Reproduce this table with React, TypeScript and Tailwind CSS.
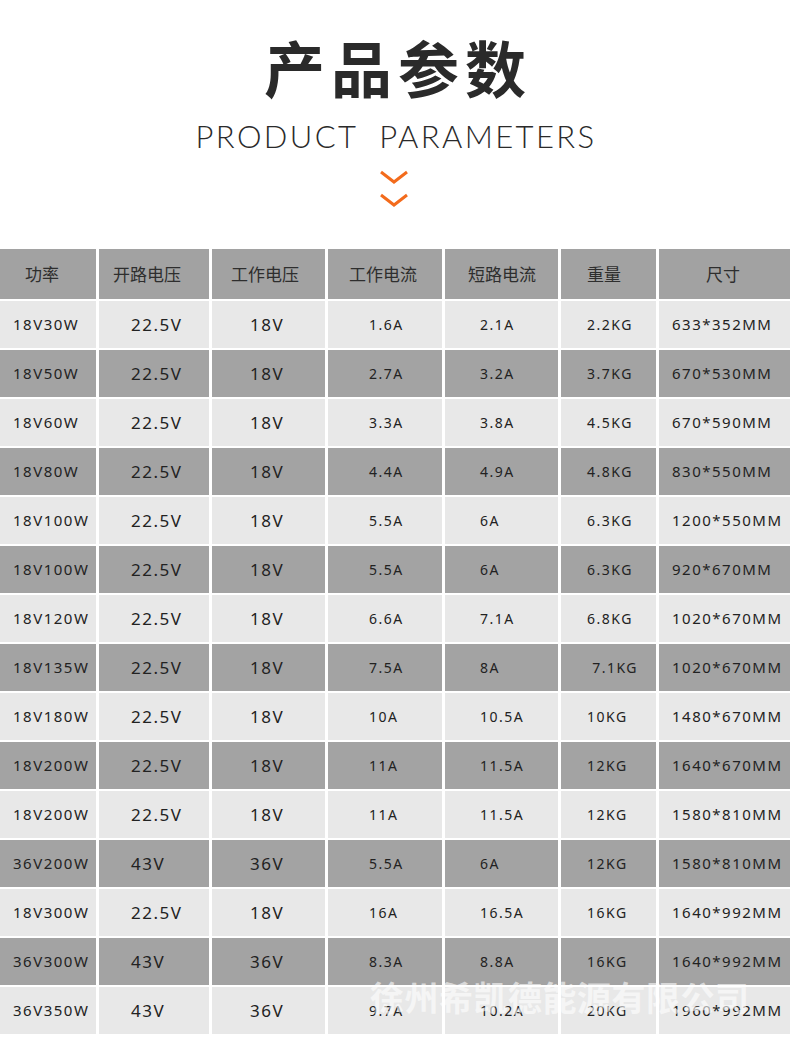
import React from 'react';

const cols = [
  { head: '功率', hp: 'pl-[25px]', bp: 'pl-[13px]', size: 'text-[15px]' },
  { head: '开路电压', hp: 'pl-[14px]', bp: 'pl-[32px]', size: 'text-[17px]' },
  { head: '工作电压', hp: 'pl-[19px]', bp: 'pl-[38px]', size: 'text-[17px]' },
  { head: '工作电流', hp: 'pl-[21px]', bp: 'pl-[41px]', size: 'text-[14px]' },
  { head: '短路电流', hp: 'pl-[23px]', bp: 'pl-[35px]', size: 'text-[14px]' },
  { head: '重量', hp: 'pl-[26px]', bp: 'pl-[26px]', size: 'text-[14px]' },
  { head: '尺寸', hp: 'pl-[47px]', bp: 'pl-[13px]', size: 'text-[15px]' },
];

const rows = [
  ['18V30W', '22.5V', '18V', '1.6A', '2.1A', '2.2KG', '633*352MM'],
  ['18V50W', '22.5V', '18V', '2.7A', '3.2A', '3.7KG', '670*530MM'],
  ['18V60W', '22.5V', '18V', '3.3A', '3.8A', '4.5KG', '670*590MM'],
  ['18V80W', '22.5V', '18V', '4.4A', '4.9A', '4.8KG', '830*550MM'],
  ['18V100W', '22.5V', '18V', '5.5A', '6A', '6.3KG', '1200*550MM'],
  ['18V100W', '22.5V', '18V', '5.5A', '6A', '6.3KG', '920*670MM'],
  ['18V120W', '22.5V', '18V', '6.6A', '7.1A', '6.8KG', '1020*670MM'],
  ['18V135W', '22.5V', '18V', '7.5A', '8A', ' 7.1KG', '1020*670MM'],
  ['18V180W', '22.5V', '18V', '10A', '10.5A', '10KG', '1480*670MM'],
  ['18V200W', '22.5V', '18V', '11A', '11.5A', '12KG', '1640*670MM'],
  ['18V200W', '22.5V', '18V', '11A', '11.5A', '12KG', '1580*810MM'],
  ['36V200W', '43V', '36V', '5.5A', '6A', '12KG', '1580*810MM'],
  ['18V300W', '22.5V', '18V', '16A', '16.5A', '16KG', '1640*992MM'],
  ['36V300W', '43V', '36V', '8.3A', '8.8A', '16KG', '1640*992MM'],
  ['36V350W', '43V', '36V', '9.7A', '10.2A', '20KG', '1960*992MM'],
];

export default function App() {
  return (
    <div className="w-[790px] h-[1042px] bg-white overflow-hidden font-['Noto_Sans','Noto_Sans_CJK_SC',sans-serif]">
      {/* heading */}
      <div className="flex flex-col items-center pt-[32px]">
        <h1 className="text-[61px] leading-[70px] font-bold tracking-[6px] pl-[6px] text-[#2a2a2a] font-['Noto_Sans_CJK_SC',sans-serif]">
          产品参数
        </h1>
        <div className="mt-[16px] text-[31px] leading-[36px] font-light tracking-[2.4px] pl-[2px] text-[#2a2a2a] font-['Lato','Open_Sans',sans-serif] whitespace-pre">
          PRODUCT  PARAMETERS
        </div>
        <svg className="mt-[16px] mr-[2px]" width="30" height="38" viewBox="0 0 30 38" fill="none">
          <path d="M2 2 L15 12 L28 2" stroke="#f36b1c" strokeWidth="3" strokeLinejoin="miter" />
          <path d="M2 25 L15 35 L28 25" stroke="#f36b1c" strokeWidth="3" strokeLinejoin="miter" />
        </svg>
      </div>

      {/* table */}
      <div className="relative mt-[41px]">
        <div className="grid grid-cols-[96px_110px_113px_114px_113px_95px_131px] gap-x-[3px] gap-y-[2px] bg-white">
          {cols.map((c) => (
            <div
              key={c.head}
              className={`h-[50px] bg-[#a2a2a2] flex items-center text-[17px] text-[#2e2e2e] font-['Noto_Sans_CJK_SC',sans-serif] ${c.hp}`}
            >
              {c.head}
            </div>
          ))}
          {rows.map((r, i) =>
            r.map((v, j) => (
              <div
                key={`${i}-${j}`}
                className={`h-[47px] flex items-center whitespace-pre tracking-[1.5px] text-[#222] ${
                  i % 2 === 0 ? 'bg-[#e8e8e8]' : 'bg-[#a3a3a3]'
                } ${cols[j].bp} ${cols[j].size}`}
              >
                {v}
              </div>
            ))
          )}
        </div>
        {/* watermark */}
        <div className="absolute left-[370px] top-[728px] text-[34px] leading-[40px] font-bold tracking-[0.5px] text-white/60 font-['Noto_Sans_CJK_SC',sans-serif] pointer-events-none">
          徐州希凯德能源有限公司
        </div>
      </div>
    </div>
  );
}
